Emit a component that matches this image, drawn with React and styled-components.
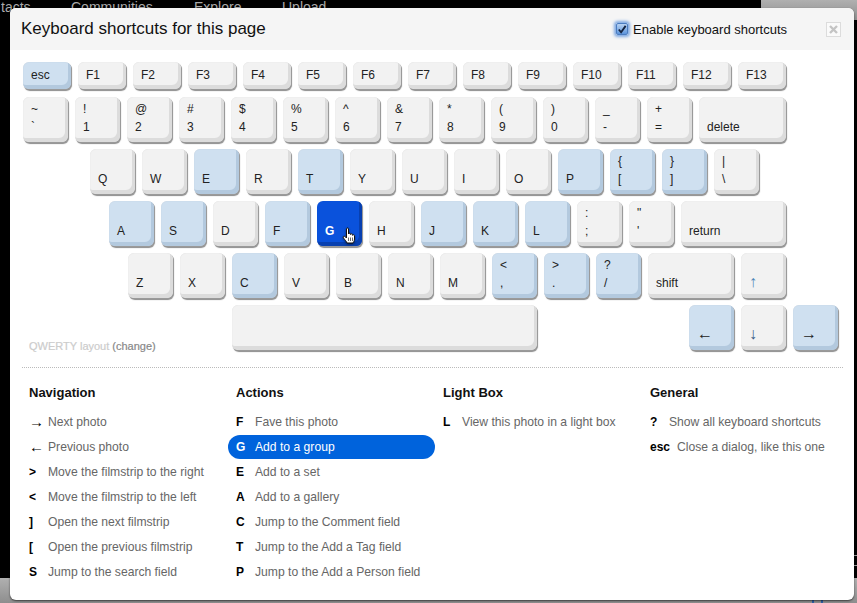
import React from "react";
import styled, { createGlobalStyle } from "styled-components";

const Global = createGlobalStyle`
  html, body { margin: 0; padding: 0; background: #000; }
  body { font-family: "Liberation Sans", Arial, sans-serif; overflow: hidden; }
  * { box-sizing: border-box; }
`;

const Page = styled.div`
  position: relative;
  width: 857px;
  height: 603px;
  background: #000;
  overflow: hidden;
  padding: 8px 3px 3px 10px;
`;

const PageNav = styled.div`
  position: absolute;
  top: -2px;
  left: 0;
  color: #aaa;
  font-size: 14px;
  line-height: 18px;
  white-space: nowrap;
`;
const NavItem = styled.span`
  position: absolute;
  top: 0;
  left: ${(p) => p.$x}px;
`;

const GrayPatch = styled.div`
  position: absolute;
  background: linear-gradient(#b0b0b0, #8e8e8e);
  left: ${(p) => p.$x}px;
  top: ${(p) => p.$y}px;
  width: ${(p) => p.$w}px;
  height: ${(p) => p.$h}px;
`;
const BlueBit = styled.div`
  position: absolute;
  bottom: 0;
  left: ${(p) => p.$x}px;
  width: 2px;
  height: 3px;
  background: #2f5fa8;
`;

const Modal = styled.div`
  position: relative;
  width: 844px;
  height: 592px;
  background: #fff;
  border-radius: 6px;
  box-shadow: 0 1px 2px rgba(0, 0, 0, 0.6);
  overflow: hidden;
`;

const Header = styled.header`
  height: 42px;
  background: #f5f5f5;
  display: flex;
  align-items: center;
  padding: 0 13px 0 11px;
`;
const Title = styled.h1`
  flex: 1;
  margin: 0;
  font-size: 17px;
  font-weight: 400;
  color: #111;
`;
const EnableLabel = styled.label`
  display: flex;
  align-items: center;
  gap: 5px;
  font-size: 13px;
  color: #111;
  margin-right: 39px;
`;
const CheckBox = styled.span`
  width: 12px;
  height: 12px;
  margin-left: -1px;
  border-radius: 2px;
  background: linear-gradient(#b9d3f2, #5c94dc);
  border: 1px solid #4a7cc0;
  box-shadow: 0 0 3px 2px #7fa9e2;
  display: flex;
  align-items: center;
  justify-content: center;
`;
const CloseBox = styled.button`
  width: 15px;
  height: 15px;
  padding: 0;
  border: 1px solid #dcdcdc;
  background: #fafafa;
  display: flex;
  align-items: center;
  justify-content: center;
`;

const Keyboard = styled.section`
  padding: 12px 0 0 13px;
  display: flex;
  flex-direction: column;
`;
const KeyRow = styled.div`
  display: flex;
  gap: 7px;
  padding-left: ${(p) => p.$indent || 0}px;
  margin-bottom: ${(p) => p.$after ?? 7}px;
`;
const palette = {
  plain: ["#f2f2f2", "#dcdcdc"],
  blue: ["#cfe0f0", "#b3c9de"],
  active: ["#0a52dc", "#0840b0"],
};
const Key = styled.div`
  position: relative;
  width: ${(p) => p.$w || 45}px;
  height: ${(p) => p.$h || 45}px;
  flex: none;
  display: flex;
  flex-direction: column;
  justify-content: flex-end;
  padding: 0 0 ${(p) => p.$pb || 6}px 8px;
  border-radius: 6px;
  background: ${(p) => palette[p.$tone][0]};
  color: ${(p) => (p.$tone === "active" ? "#fff" : "#222")};
  font-weight: ${(p) => (p.$tone === "active" ? 700 : 400)};
  font-size: 12px;
  line-height: 18px;
  box-shadow: inset -3px -4px 0 0 ${(p) => palette[p.$tone][1]},
    inset 0 0 1px rgba(0, 0, 0, 0.14),
    1px 1px 0 #9a9a9a, 1px 2px 1px #8c8c8c;
`;
const ArrowGlyph = styled.span`
  display: block;
  color: ${(p) => p.$color || "#222"};
  font-size: 16px;
  margin-bottom: 1px;
`;
const Hand = styled.svg`
  position: absolute;
  left: 25px;
  top: 26px;
  filter: drop-shadow(0 1px 1px rgba(0, 0, 0, 0.5));
`;

const BottomLayout = styled.div`
  display: flex;
  align-items: flex-end;
  width: 202px;
  flex: none;
  padding: 0 0 0 6px;
`;
const LayoutNote = styled.span`
  font-size: 11px;
  font-weight: 400;
  line-height: 14px;
  color: #ccc;
  margin-bottom: -3px;
  -webkit-text-stroke: 0.2px currentColor;
`;
const Change = styled.span`
  color: #888;
`;
const ClusterGap = styled.div`
  width: 138px;
  flex: none;
`;

const Divider = styled.hr`
  margin: 17px 11px 0 12px;
  border: 0;
  border-top: 1px dotted #bbb;
  height: 0;
`;
const Columns = styled.div`
  display: grid;
  grid-template-columns: repeat(4, 207px);
  padding: 16px 0 0 19px;
`;
const Column = styled.div`
  display: flex;
  flex-direction: column;
`;
const ColHead = styled.h2`
  margin: 0 0 7px;
  font-size: 13px;
  line-height: 18px;
  font-weight: 700;
  color: #111;
`;
const Row = styled.div`
  display: flex;
  align-items: center;
  height: 25px;
  font-size: 12.15px;
  color: ${(p) => (p.$on ? "#fff" : "#666")};
  ${(p) =>
    p.$on &&
    `
    margin: 1px 8px 0 -8px;
    padding-left: 8px;
    background: #0063dc;
    border-radius: 12px;
    height: 24px;
  `}
`;
const Short = styled.b`
  flex: none;
  min-width: 12px;
  width: ${(p) => (p.$arrow ? "12px" : "auto")};
  margin-right: 7px;
  font-size: ${(p) => (p.$arrow ? 15 : 12)}px;
  font-weight: ${(p) => (p.$arrow ? 400 : 700)};
  color: ${(p) => (p.$on ? "#fff" : "#000")};
`;

const fnRow = ["esc", ...Array.from({ length: 13 }, (_, i) => `F${i + 1}`)];
const numRow = [
  ["~", "`"], ["!", "1"], ["@", "2"], ["#", "3"], ["$", "4"], ["%", "5"], ["^", "6"],
  ["&", "7"], ["*", "8"], ["(", "9"], [")", "0"], ["_", "-"], ["+", "="],
];
const qRow = [
  ["Q"], ["W"], ["E", 1], ["R"], ["T", 1], ["Y"], ["U"], ["I"], ["O"], ["P", 1],
];
const aRow = [
  ["A", 1], ["S", 1], ["D"], ["F", 1], ["G", 2], ["H"], ["J", 1], ["K", 1], ["L", 1],
];
const zRow = [["Z"], ["X"], ["C", 1], ["V"], ["B"], ["N"], ["M"]];

const tone = (t) => (t === 2 ? "active" : t === 1 ? "blue" : "plain");

const columns = [
  {
    head: "Navigation",
    rows: [
      ["→", "Next photo"], ["←", "Previous photo"], [">", "Move the filmstrip to the right"],
      ["<", "Move the filmstrip to the left"], ["]", "Open the next filmstrip"],
      ["[", "Open the previous filmstrip"], ["S", "Jump to the search field"],
    ],
  },
  {
    head: "Actions",
    rows: [
      ["F", "Fave this photo"], ["G", "Add to a group", true], ["E", "Add to a set"],
      ["A", "Add to a gallery"], ["C", "Jump to the Comment field"],
      ["T", "Jump to the Add a Tag field"], ["P", "Jump to the Add a Person field"],
    ],
  },
  { head: "Light Box", rows: [["L", "View this photo in a light box"]] },
  {
    head: "General",
    rows: [["?", "Show all keyboard shortcuts"], ["esc", "Close a dialog, like this one"]],
  },
];

const HandCursor = () => (
  <Hand width="14" height="17" viewBox="0 0 14 17">
    <path
      d="M4.5 2C4.5.6 6.5.6 6.5 2V7C6.5 6 8.5 6 8.5 7V7.5C8.5 6.6 10.5 6.6 10.5 7.8V8.3C10.5 7.5 12.5 7.5 12.5 8.8V12C12.5 14 11.5 15 11 16H5C4.5 14.5 3 13 1.5 11C.5 9.5 2 8.5 3.5 10L4.5 11Z"
      fill="#fff"
      stroke="#111"
      strokeWidth="1"
    />
    <path d="M6.5 10.5V14M8.5 10.5V14M10.5 10.5V14" stroke="#444" strokeWidth=".8" fill="none" />
  </Hand>
);

export default function App() {
  return (
    <Page>
      <Global />
      <PageNav>
        <NavItem $x={1}>tacts</NavItem>
        <NavItem $x={71}>Communities</NavItem>
        <NavItem $x={194}>Explore</NavItem>
        <NavItem $x={282}>Upload</NavItem>
      </PageNav>
      <GrayPatch $x={761} $y={0} $w={96} $h={20} />
      <GrayPatch $x={0} $y={578} $w={857} $h={25} />
      <GrayPatch $x={854} $y={555} $w={3} $h={1} />
      <GrayPatch $x={854} $y={565} $w={3} $h={1} />
      <BlueBit $x={812} />
      <BlueBit $x={821} />

      <Modal>
        <Header>
          <Title>Keyboard shortcuts for this page</Title>
          <EnableLabel>
            <CheckBox>
              <svg width="11" height="11" viewBox="0 0 11 11">
                <path d="M2 5.5L4.5 8.5L9.5 1.5" fill="none" stroke="#14233f" strokeWidth="2" />
              </svg>
            </CheckBox>
            Enable keyboard shortcuts
          </EnableLabel>
          <CloseBox aria-label="Close">
            <svg width="11" height="11" viewBox="0 0 11 11">
              <path d="M2 2L9 9M9 2L2 9" stroke="#c4c4c4" strokeWidth="2.4" />
            </svg>
          </CloseBox>
        </Header>

        <Keyboard>
          <KeyRow $after={8}>
            {fnRow.map((k) => (
              <Key key={k} $w={48} $h={27} $pb={5} $tone={k === "esc" ? "blue" : "plain"}>
                {k}
              </Key>
            ))}
          </KeyRow>

          <KeyRow>
            {numRow.map(([a, b]) => (
              <Key key={b} $tone="plain">
                <span>{a}</span>
                <span>{b}</span>
              </Key>
            ))}
            <Key $w={87} $tone="plain">delete</Key>
          </KeyRow>

          <KeyRow $indent={67}>
            {qRow.map(([k, t]) => (
              <Key key={k} $tone={tone(t)}>{k}</Key>
            ))}
            <Key $tone="blue"><span>{"{"}</span><span>[</span></Key>
            <Key $tone="blue"><span>{"}"}</span><span>]</span></Key>
            <Key $tone="plain"><span>|</span><span>\</span></Key>
          </KeyRow>

          <KeyRow $indent={86}>
            {aRow.map(([k, t]) => (
              <Key key={k} $tone={tone(t)}>
                {k}
                {t === 2 && <HandCursor />}
              </Key>
            ))}
            <Key $tone="plain"><span>:</span><span>;</span></Key>
            <Key $tone="plain"><span>"</span><span>'</span></Key>
            <Key $w={105} $tone="plain">return</Key>
          </KeyRow>

          <KeyRow $indent={105}>
            {zRow.map(([k, t]) => (
              <Key key={k} $tone={tone(t)}>{k}</Key>
            ))}
            <Key $tone="blue"><span>&lt;</span><span>,</span></Key>
            <Key $tone="blue"><span>&gt;</span><span>.</span></Key>
            <Key $tone="blue"><span>?</span><span>/</span></Key>
            <Key $w={86} $tone="plain">shift</Key>
            <Key $tone="plain"><ArrowGlyph $color="#4f86b8">↑</ArrowGlyph></Key>
          </KeyRow>

          <KeyRow $after={0}>
            <BottomLayout>
              <LayoutNote>
                QWERTY layout <Change>(change)</Change>
              </LayoutNote>
            </BottomLayout>
            <Key $w={305} $tone="plain" />
            <ClusterGap />
            <Key $tone="blue"><ArrowGlyph>←</ArrowGlyph></Key>
            <Key $tone="plain"><ArrowGlyph $color="#3a5f88">↓</ArrowGlyph></Key>
            <Key $tone="blue"><ArrowGlyph>→</ArrowGlyph></Key>
          </KeyRow>
        </Keyboard>

        <Divider />

        <Columns>
          {columns.map((c) => (
            <Column key={c.head}>
              <ColHead>{c.head}</ColHead>
              {c.rows.map(([k, text, on]) => (
                <Row key={text} $on={on}>
                  <Short $on={on} $arrow={k === "→" || k === "←"}>{k}</Short>
                  {text}
                </Row>
              ))}
            </Column>
          ))}
        </Columns>
      </Modal>
    </Page>
  );
}
